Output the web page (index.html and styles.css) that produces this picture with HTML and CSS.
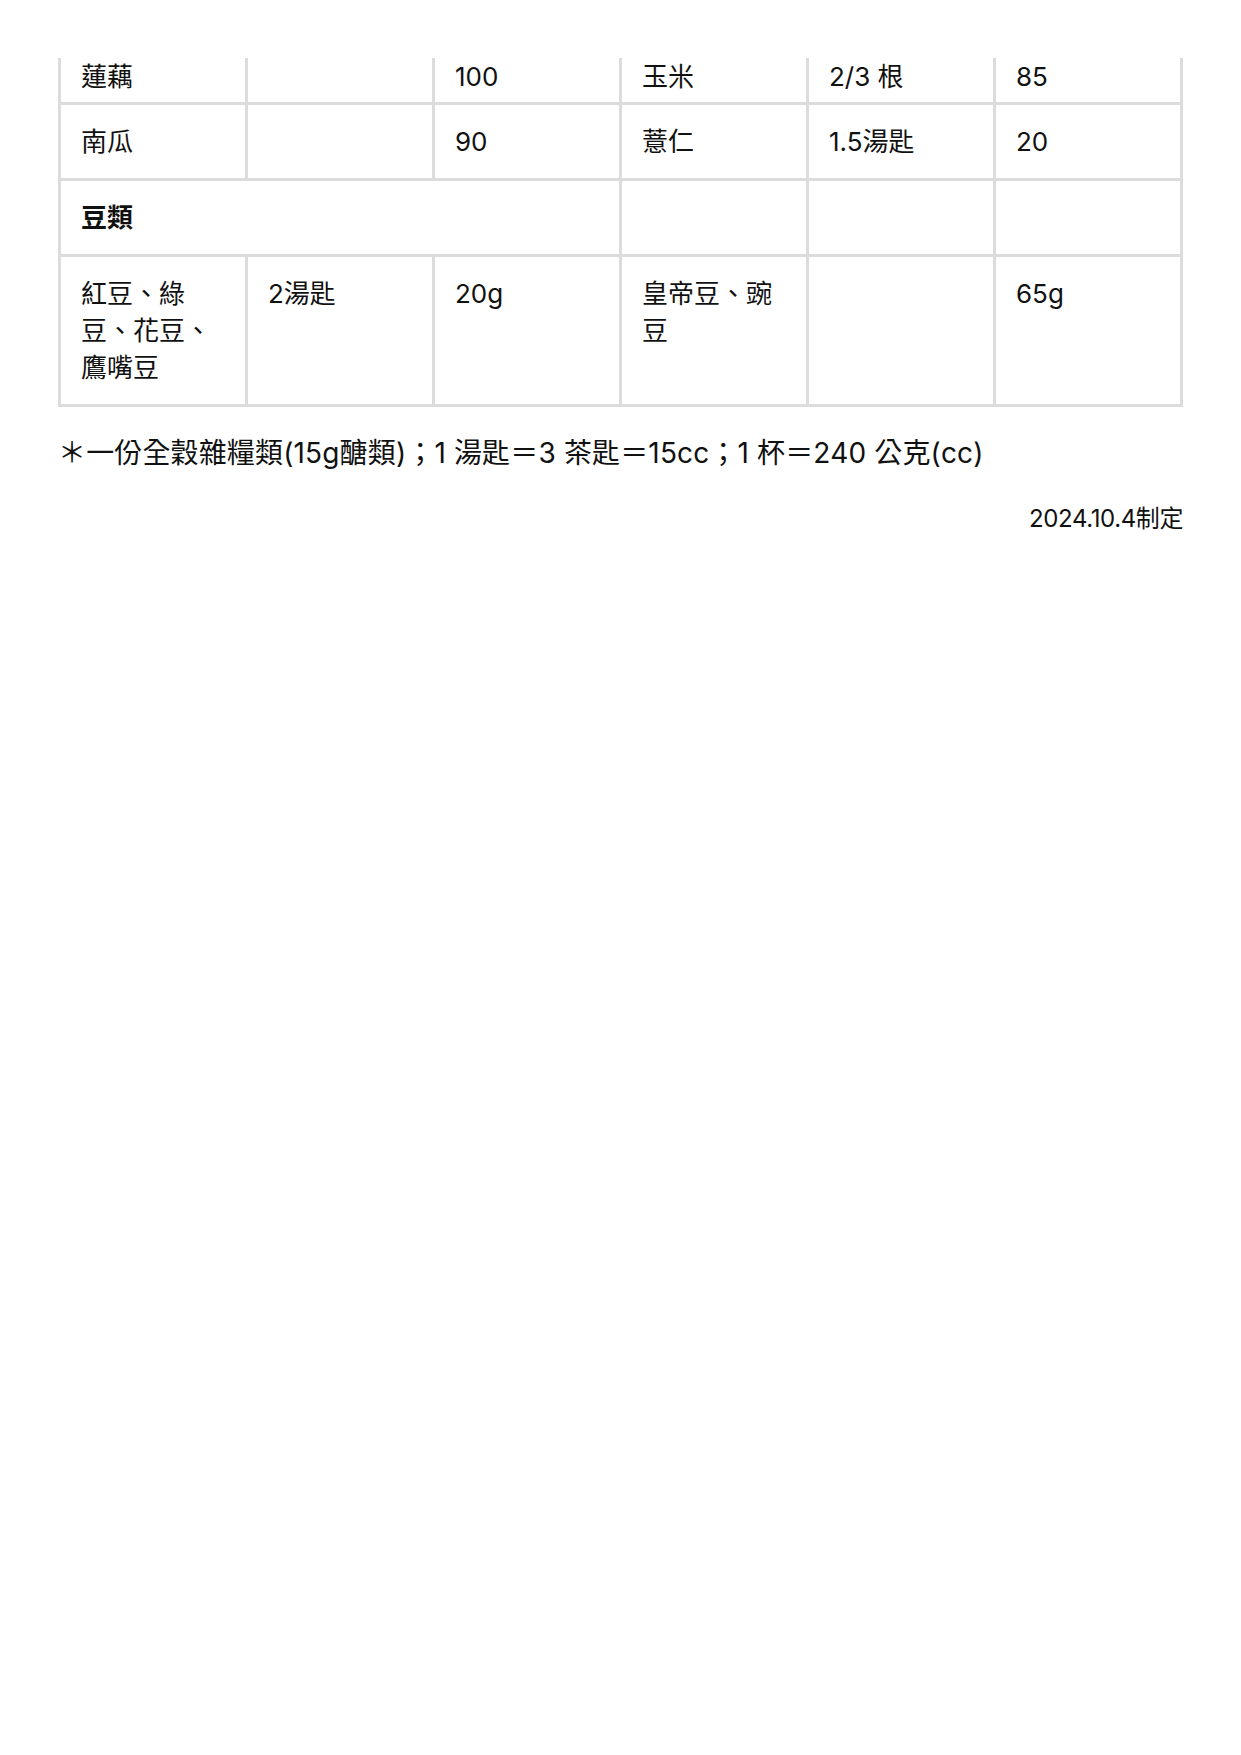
FILE: index.html
```html
<!DOCTYPE html>
<html lang="zh-Hant">
<head>
<meta charset="utf-8">
<title>全穀雜糧類份量表</title>
<link rel="stylesheet" href="styles.css">
</head>
<body>
<div class="page">
  <table class="food-table">
    <tr class="row-cont">
      <td>蓮藕</td><td></td><td>100</td><td>玉米</td><td>2/3 根</td><td>85</td>
    </tr>
    <tr>
      <td>南瓜</td><td></td><td>90</td><td>薏仁</td><td>1.5湯匙</td><td>20</td>
    </tr>
    <tr>
      <td colspan="3" class="group">豆類</td><td></td><td></td><td></td>
    </tr>
    <tr>
      <td>紅豆、綠豆、花豆、鷹嘴豆</td><td>2湯匙</td><td>20g</td><td>皇帝豆、豌豆</td><td></td><td>65g</td>
    </tr>
  </table>
  <p class="note">＊一份全穀雜糧類(15g醣類)；1 湯匙＝3 茶匙＝15cc；1 杯＝240 公克(cc)</p>
  <p class="date">2024.10.4制定</p>
</div>
</body>
</html>
```
FILE: styles.css
```css
html, body {
  margin: 0;
  padding: 0;
  background: #ffffff;
}
body {
  font-family: "Inter", "Noto Sans CJK TC", sans-serif;
  color: #111111;
}
.page {
  padding: 58px 0 0 58px;
  width: 1125px;
}
.food-table {
  width: 1125px;
  border-collapse: collapse;
  table-layout: fixed;
  font-size: 26px;
  line-height: 37px;
}
.food-table td {
  border: 3px solid #dcdcdc;
  padding: 18px 20px 18px 20px;
  vertical-align: top;
  text-align: left;
}
.row-cont td {
  border-top: none;
  padding-top: 0;
  padding-bottom: 7px;
}
.group {
  font-weight: 700;
}
.note {
  margin: 26px 0 0 0;
  font-size: 28px;
  line-height: 40px;
  letter-spacing: 0.15px;
}
.date {
  margin: 28px 0 0 0;
  font-size: 24px;
  line-height: 36px;
  letter-spacing: -0.4px;
  text-align: right;
}
```
